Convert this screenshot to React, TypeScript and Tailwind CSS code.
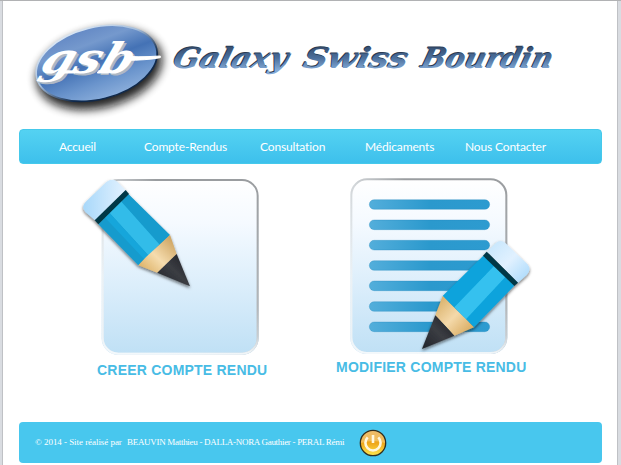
const navItems = [
  { label: 'Accueil', box: 'w-[85px]' },
  { label: 'Compte-Rendus', box: 'w-[116px]' },
  { label: 'Consultation', box: 'w-[105px]' },
  { label: 'Médicaments', box: 'w-[100px]' },
  { label: 'Nous Contacter', box: 'w-[100px]' },
];

const lineRows = [89, 150, 211, 272, 333, 395, 456];

function Logo() {
  return (
    <svg viewBox="0 0 600 390" className="h-[130px] w-[200px] shrink-0 overflow-visible">
      <defs>
        <linearGradient id="oval" x1="0.4" y1="0" x2="0.6" y2="1">
          <stop offset="0" stopColor="#6489c5" />
          <stop offset="0.22" stopColor="#7599cd" />
          <stop offset="0.48" stopColor="#4472b5" />
          <stop offset="0.75" stopColor="#6a94cc" />
          <stop offset="1" stopColor="#8baedb" />
        </linearGradient>
        <linearGradient id="ovalRim" x1="0" y1="0" x2="0.5" y2="1">
          <stop offset="0" stopColor="#eef5fc" />
          <stop offset="0.5" stopColor="#a4bddb" />
          <stop offset="0.85" stopColor="#10294b" />
        </linearGradient>
        <filter id="soft" x="-30%" y="-30%" width="160%" height="160%">
          <feGaussianBlur stdDeviation="14" />
        </filter>
      </defs>
      <ellipse cx="298" cy="208" rx="192" ry="116" transform="rotate(-14 298 208)" fill="#0c0c0c" opacity="0.9" filter="url(#soft)" />
      <ellipse cx="290" cy="190" rx="185" ry="108" transform="rotate(-14 290 190)" fill="url(#oval)" stroke="url(#ovalRim)" strokeWidth="5" />
      <g fontFamily="'DejaVu Serif', serif" fontWeight="700" fontStyle="italic" fontSize="126">
        <text transform="translate(121 226) skewX(-20)" textLength="274" lengthAdjust="spacingAndGlyphs" fill="#aeb8c4">gsb</text>
        <text transform="translate(115 220) skewX(-20)" textLength="274" lengthAdjust="spacingAndGlyphs" fill="#fff">gsb</text>
      </g>
      <path d="M188 212L230 213L226 219H188ZM296 212L330 213L326 219H292ZM376 167Q400 173 481 168L481 173Q440 181 376 181Z" fill="#fff" stroke="#fff" strokeWidth="3" />
    </svg>
  );
}

function Title() {
  return (
    <svg viewBox="0 0 400 60" className="h-[60px] w-[400px]">
      <defs>
        <linearGradient id="steel" x1="0" y1="0" x2="0" y2="1">
          <stop offset="0" stopColor="#2b3f5c" />
          <stop offset="0.5" stopColor="#4b6f9c" />
          <stop offset="0.85" stopColor="#83a9d5" />
        </linearGradient>
      </defs>
      <g fontFamily="'DejaVu Serif', serif" fontWeight="700" fontStyle="italic" fontSize="28">
        <g fill="#2a3b53">
          <text transform="translate(9 37) skewX(-14)" textLength="114" lengthAdjust="spacingAndGlyphs">Galaxy</text>
          <text transform="translate(139 37) skewX(-14)" textLength="104" lengthAdjust="spacingAndGlyphs">Swiss</text>
          <text transform="translate(257 37) skewX(-14)" textLength="131" lengthAdjust="spacingAndGlyphs">Bourdin</text>
        </g>
        <g fill="url(#steel)" aria-hidden="true">
          <text transform="translate(9.8 37.8) skewX(-14)" textLength="114" lengthAdjust="spacingAndGlyphs">Galaxy</text>
          <text transform="translate(139.8 37.8) skewX(-14)" textLength="104" lengthAdjust="spacingAndGlyphs">Swiss</text>
          <text transform="translate(257.8 37.8) skewX(-14)" textLength="131" lengthAdjust="spacingAndGlyphs">Bourdin</text>
        </g>
      </g>
    </svg>
  );
}

function Gradients() {
  return (
    <svg className="absolute h-0 w-0">
      <defs>
        <linearGradient id="card" x1="0" y1="0" x2="0" y2="1">
          <stop offset="0" stopColor="#fff" />
          <stop offset="0.25" stopColor="#f5faff" />
          <stop offset="0.6" stopColor="#dceefb" />
          <stop offset="1" stopColor="#bfe0f5" />
        </linearGradient>
        <linearGradient id="cardEdge" x1="0" y1="0.55" x2="0.62" y2="0">
          <stop offset="0" stopColor="#e9eff3" />
          <stop offset="0.45" stopColor="#d0d4d7" />
          <stop offset="0.75" stopColor="#9a9da0" />
        </linearGradient>
        <linearGradient id="edgeFade" x1="0" y1="0" x2="0" y2="1">
          <stop offset="0" stopColor="#f4f9fc" stopOpacity="0" />
          <stop offset="0.9" stopColor="#f4f9fc" stopOpacity="0.35" />
          <stop offset="1" stopColor="#f4f9fc" stopOpacity="0.9" />
        </linearGradient>
        <linearGradient id="bar">
          <stop offset="0" stopColor="#53aedb" />
          <stop offset="0.5" stopColor="#2b99cd" />
          <stop offset="1" stopColor="#2d9bd0" />
        </linearGradient>
        <linearGradient id="eraser">
          <stop offset="0" stopColor="#a8d8fa" />
          <stop offset="1" stopColor="#e3f2ff" />
        </linearGradient>
        <linearGradient id="eraserRight" x1="0" y1="0" x2="1" y2="1">
          <stop offset="0" stopColor="#c3e5fc" />
          <stop offset="0.5" stopColor="#e1f1ff" />
          <stop offset="1" stopColor="#a4d7fb" />
        </linearGradient>
        <linearGradient id="wood" x1="0" y1="1" x2="1" y2="0">
          <stop offset="0" stopColor="#d8a856" />
          <stop offset="0.45" stopColor="#f5dcae" />
          <stop offset="1" stopColor="#c5974f" />
        </linearGradient>
        <linearGradient id="woodRight" x1="0" y1="0" x2="1" y2="1">
          <stop offset="0" stopColor="#d5a95d" />
          <stop offset="0.5" stopColor="#f4d9aa" />
          <stop offset="1" stopColor="#d2a04e" />
        </linearGradient>
        <linearGradient id="lead" x1="0" y1="1" x2="1" y2="0">
          <stop offset="0" stopColor="#202329" />
          <stop offset="0.5" stopColor="#3b3d43" />
          <stop offset="1" stopColor="#191b20" />
        </linearGradient>
        <filter id="shade" x="-20%" y="-20%" width="140%" height="140%">
          <feDropShadow dx="0" dy="5" stdDeviation="5" floodColor="#111" floodOpacity="0.6" />
        </filter>
        <filter id="edgeBlur"><feGaussianBlur stdDeviation="1.5" /></filter>
      </defs>
    </svg>
  );
}

function Sheet({ x, y }: { x: number; y: number }) {
  return (
    <>
      <rect x={x} y={y} width="471" height="527" rx="49" fill="url(#card)" />
      <g fill="none" strokeWidth="6" filter="url(#edgeBlur)">
        <rect x={x + 3} y={y + 3} width="465" height="521" rx="47" stroke="url(#cardEdge)" />
        <rect x={x + 3} y={y + 3} width="465" height="521" rx="47" stroke="url(#edgeFade)" />
      </g>
    </>
  );
}

function CreateIcon() {
  return (
    <svg viewBox="0 0 600 561" className="h-[187px] w-[200px]">
      <Sheet x={80} y={27} />
      <g filter="url(#shade)">
        <path d="M152 61L128 36Q113 22 94 36L34 94Q17 110 31 126L62 152Z" fill="url(#eraser)" />
        <path d="M160 72L285 195L190 286L70 163Z" fill="#149bcd" />
        <path d="M138 94L253 223L221 257L103 128Z" fill="#32bce9" />
        <path d="M103 128L221 257L208 268L89 142Z" fill="#17a6db" />
        <path d="M152 60L162 72L70 163L59 151Z" fill="#063947" />
        <path d="M285 195L305 252L247 308L190 286L214 260Z" fill="url(#wood)" />
        <path d="M305 252L345 349L247 308Z" fill="url(#lead)" />
      </g>
    </svg>
  );
}

function EditIcon() {
  return (
    <svg viewBox="0 0 660 561" className="h-[187px] w-[220px]">
      <Sheet x={76} y={25} />
      {lineRows.map((y) => (
        <rect key={y} x="133" y={y} width="361" height="29" rx="14.5" fill="url(#bar)" stroke="#238abc" strokeWidth="1" />
      ))}
      <g filter="url(#shade)">
        <path d="M487 245L510 221Q525 205 542 220L607 282Q621 298 605 315L579 338Z" fill="url(#eraserRight)" />
        <path d="M475 257L568 347L447 472L353 378Z" fill="#08a3dc" />
        <path d="M507 288L541 321L423 448L388 412Z" fill="#36c1ef" />
        <path d="M485 245L579 338L568 348L474 257Z" fill="#063947" />
        <path d="M353 378L447 472L388 497L331 436Z" fill="url(#woodRight)" />
        <path d="M331 436L388 497L291 537Z" fill="url(#lead)" />
      </g>
    </svg>
  );
}

function PowerButton() {
  return (
    <svg viewBox="0 0 28 28" className="ml-[14px] h-7 w-7 shrink-0">
      <defs>
        <linearGradient id="gold" x1="0" y1="0" x2="0" y2="1">
          <stop offset="0" stopColor="#e7a63b" />
          <stop offset="0.5" stopColor="#eea61a" />
          <stop offset="1" stopColor="#ffe84e" />
        </linearGradient>
      </defs>
      <circle cx="14" cy="14" r="12.7" fill="url(#gold)" stroke="#302e20" strokeWidth="1.3" />
      <path d="M2 14A12 12 0 0 1 26 14Q14 10 2 14Z" fill="#fff" opacity="0.25" />
      <path d="M8.7 8.4A7.6 7.6 0 1 0 19.3 8.4M14 6v8" fill="none" stroke="#fff8df" strokeWidth="2.6" />
    </svg>
  );
}

export default function App() {
  return (
    <div className="h-[465px] w-[621px] overflow-hidden border-t border-[#b1b2b4] bg-[#d9dce1]">
      <Gradients />
      <div className="ml-[2px] flex h-[464px] w-[616px] flex-col border-x border-[#bfc1c5] bg-white pl-4">
        <header className="flex h-[128px] items-start">
          <div className="-ml-[19px] -mt-px"><Logo /></div>
          <div className="-ml-[38px] mt-[29px]"><Title /></div>
        </header>
        <nav className="flex h-[35px] w-[583px] shrink-0 items-center rounded-[4px] border border-[#45c9eb] bg-linear-to-b from-[#54d2f2] to-[#3dc0ec] pl-[39px] font-[Lato,sans-serif] text-[12px] text-white">
          {navItems.map((item) => (
            <a key={item.label} className={`${item.box} shrink-0 whitespace-nowrap tracking-[-0.15px]`}>{item.label}</a>
          ))}
        </nav>
        <main className="flex h-[258px] shrink-0 items-start pl-14 pt-[6px] font-['Liberation_Sans',Arial,sans-serif] text-[14px] leading-4 font-bold text-[#48bce5]">
          <section className="flex w-[250px] flex-col">
            <CreateIcon />
            <h2 className="mt-[5px] ml-[22px] whitespace-nowrap tracking-[0.22px]">CREER COMPTE RENDU</h2>
          </section>
          <section className="flex w-[220px] flex-col">
            <EditIcon />
            <h2 className="mt-[2px] ml-[11px] whitespace-nowrap tracking-[0.22px]">MODIFIER COMPTE RENDU</h2>
          </section>
        </main>
        <footer className="flex h-[41px] w-[583px] shrink-0 items-center rounded-[4px] bg-[#48c7ee] pl-4 font-['Liberation_Serif',serif] text-[9px] text-white">
          <span className="w-[92px] whitespace-nowrap tracking-[-0.05px]">© 2014 - Site réalisé par</span>
          <span className="w-[218px] whitespace-nowrap tracking-[-0.3px]">BEAUVIN Matthieu - DALLA-NORA Gauthier - PERAL Rémi</span>
          <PowerButton />
        </footer>
      </div>
    </div>
  );
}
